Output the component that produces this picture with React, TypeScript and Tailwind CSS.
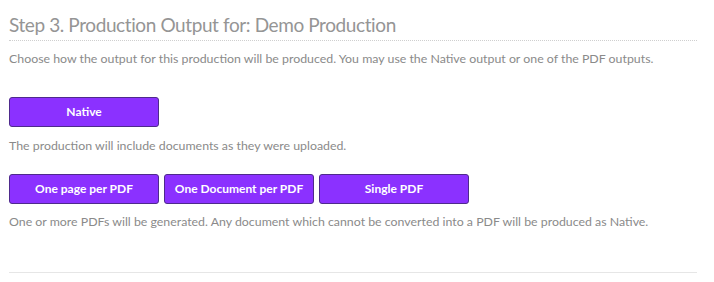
export default function App() {
  const btn =
    "w-[150px] h-[30px] rounded-[3px] border border-[#4e2a8c] bg-[#8b31ff] text-white text-[12px] font-bold flex items-center justify-center";

  return (
    <div className="w-[714px] h-[282px] bg-white px-[9px] pt-[12px] font-['Lato',sans-serif] text-[#8a8a8a]">
      <div className="w-[688px]">
        <h2 className="text-[19px] leading-[26px] tracking-[-0.4px] text-[#959595] pb-[2px] border-b border-dotted border-[#cfcfcf]">
          Step 3. Production Output for: Demo Production
        </h2>
        <p className="text-[12.35px] leading-[18px] mt-[9px]">
          Choose how the output for this production will be produced. You may use the Native output or one of the PDF outputs.
        </p>

        <div className="mt-[29px]">
          <button className={btn}>Native</button>
        </div>
        <p className="text-[12.35px] leading-[18px] mt-[10px]">
          The production will include documents as they were uploaded.
        </p>

        <div className="mt-[19px] flex gap-[5px]">
          <button className={btn}>One page per PDF</button>
          <button className={btn}>One Document per PDF</button>
          <button className={btn}>Single PDF</button>
        </div>
        <p className="text-[12.35px] leading-[18px] mt-[9px]">
          One or more PDFs will be generated. Any document which cannot be converted into a PDF will be produced as Native.
        </p>

        <div className="mt-[41px] border-t border-[#e6e6e6]" />
      </div>
    </div>
  );
}
